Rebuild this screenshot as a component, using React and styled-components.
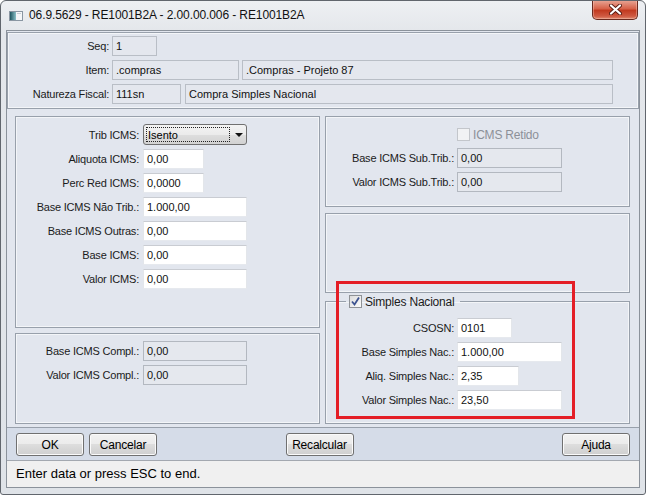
import React from "react";
import styled, { createGlobalStyle } from "styled-components";

const COLORS = {
  frame: "#e6e9ed",
  client: "#e2e6ee",
  panelLine: "#98a0ab",
  bar: "#d5dce8",
  status: "#f0f0f0",
  text: "#1b1b1b",
  disabledText: "#8c9098",
  red: "#e41e26",
};

const GlobalStyle = createGlobalStyle`
  html, body {
    margin: 0;
    padding: 0;
    background: #ffffff;
  }
  body {
    font-family: "Liberation Sans", Arial, sans-serif;
    font-size: 11px;
    color: ${COLORS.text};
  }
`;

const AppIcon = () => (
  <svg width="14" height="10" viewBox="0 0 14 10">
    <defs>
      <linearGradient id="appicon" x1="0" x2="1" y1="0" y2="0">
        <stop offset="0" stopColor="#1f5660" />
        <stop offset="1" stopColor="#8ac0c8" />
      </linearGradient>
    </defs>
    <rect x="0.5" y="0.5" width="13" height="9" fill="#f4f6f8" stroke="#8a96a2" />
    <rect x="1" y="1" width="6" height="8" fill="url(#appicon)" />
    <rect x="8" y="2" width="4" height="1" fill="#c6ced6" />
  </svg>
);

const CloseGlyph = () => (
  <svg width="13" height="11" viewBox="0 0 13 11">
    <path d="M2 1.5 L11 9.5 M11 1.5 L2 9.5" stroke="#5a1d14" strokeWidth="4" strokeLinecap="round" />
    <path d="M2 1.5 L11 9.5 M11 1.5 L2 9.5" stroke="#ffffff" strokeWidth="2.2" strokeLinecap="round" />
  </svg>
);

const CheckMark = () => (
  <svg width="11" height="11" viewBox="0 0 11 11">
    <path d="M2 5.5 L4.5 8.5 L9 1.5" fill="none" stroke="#3d5390" strokeWidth="1.8" />
  </svg>
);

const Checkbox = ({ checked, disabled }) => (
  <Box $disabled={disabled}>{checked && <CheckMark />}</Box>
);

const App = () => {
  return (
    <>
      <GlobalStyle />
      <Window>
        <TitleBar>
          <AppIcon />
          <Title>06.9.5629 - RE1001B2A - 2.00.00.006 - RE1001B2A</Title>
          <CloseButton>
            <CloseGlyph />
          </CloseButton>
        </TitleBar>
        <Client>
          <MainArea>
            <TopPanel>
              <FormGrid $labelW={100} $gap={3} $pt={3} $pb={4}>
                <Label>Seq:</Label>
                <Field $w={45} $readonly>1</Field>
                <Label>Item:</Label>
                <FieldPair $gap={3}>
                  <Field $w={127} $readonly>.compras</Field>
                  <Field $w={371} $readonly>.Compras - Projeto 87</Field>
                </FieldPair>
                <Label>Natureza Fiscal:</Label>
                <FieldPair $gap={4}>
                  <Field $w={69} $readonly>111sn</Field>
                  <Field $w={428} $readonly>Compra Simples Nacional</Field>
                </FieldPair>
              </FormGrid>
            </TopPanel>

            <Columns>
              <Column>
                <Panel $h={212}>
                  <FormGrid $labelW={122} $gap={4} $pt={7}>
                    <Label>Trib ICMS:</Label>
                    <Select>
                      <SelectText>Isento</SelectText>
                      <Arrow />
                    </Select>
                    <Label>Aliquota ICMS:</Label>
                    <Field $w={61}>0,00</Field>
                    <Label>Perc Red ICMS:</Label>
                    <Field $w={61}>0,0000</Field>
                    <Label>Base ICMS Não Trib.:</Label>
                    <Field $w={104}>1.000,00</Field>
                    <Label>Base ICMS Outras:</Label>
                    <Field $w={104}>0,00</Field>
                    <Label>Base ICMS:</Label>
                    <Field $w={104}>0,00</Field>
                    <Label>Valor ICMS:</Label>
                    <Field $w={104}>0,00</Field>
                  </FormGrid>
                </Panel>
                <Panel $grow $mt={5}>
                  <FormGrid $labelW={122} $gap={4} $pt={7}>
                    <Label>Base ICMS Compl.:</Label>
                    <Field $w={104} $disabled>0,00</Field>
                    <Label>Valor ICMS Compl.:</Label>
                    <Field $w={104} $disabled>0,00</Field>
                  </FormGrid>
                </Panel>
              </Column>

              <Column>
                <Panel $h={91}>
                  <FormGrid $labelW={127} $gap={3} $pt={8}>
                    <span />
                    <CheckRow $h={19}>
                      <Checkbox disabled />
                      <CheckLabel $disabled>ICMS Retido</CheckLabel>
                    </CheckRow>
                    <Label>Base ICMS Sub.Trib.:</Label>
                    <Field $w={105} $disabled>0,00</Field>
                    <Label>Valor ICMS Sub.Trib.:</Label>
                    <Field $w={105} $disabled>0,00</Field>
                  </FormGrid>
                </Panel>
                <Panel $h={80} $mt={6} />
                <GroupBox>
                  <Legend>
                    <Checkbox checked />
                    <CheckLabel>Simples Nacional</CheckLabel>
                  </Legend>
                  <FormGrid $labelW={127} $gap={3} $pt={9}>
                    <Label>CSOSN:</Label>
                    <Field $w={55}>0101</Field>
                    <Label>Base Simples Nac.:</Label>
                    <Field $w={105}>1.000,00</Field>
                    <Label>Aliq. Simples Nac.:</Label>
                    <Field $w={62}>2,35</Field>
                    <Label>Valor Simples Nac.:</Label>
                    <Field $w={105}>23,50</Field>
                  </FormGrid>
                </GroupBox>
              </Column>

              <Highlight />
            </Columns>
          </MainArea>

          <ButtonBar>
            <ButtonGroup>
              <Button>OK</Button>
              <Button>Cancelar</Button>
            </ButtonGroup>
            <Button $center>Recalcular</Button>
            <ButtonGroup $end>
              <Button>Ajuda</Button>
            </ButtonGroup>
          </ButtonBar>

          <StatusBar>Enter data or press ESC to end.</StatusBar>
        </Client>
      </Window>
    </>
  );
};

const Window = styled.div`
  box-sizing: border-box;
  width: 646px;
  height: 495px;
  display: flex;
  flex-direction: column;
  border: 1px solid #61666d;
  border-radius: 6px 6px 3px 3px;
  background: linear-gradient(to bottom, #eef0f3 0px, #e4e7eb 30px, #dfe3e8 100%);
  overflow: hidden;
`;

const TitleBar = styled.div`
  height: 29px;
  flex-shrink: 0;
  display: flex;
  align-items: center;
  padding-left: 8px;
  gap: 6px;
`;

const Title = styled.div`
  font-family: "Liberation Sans", Arial, sans-serif;
  font-size: 12px;
  letter-spacing: -0.1px;
  color: #111;
  flex: 1;
  padding-bottom: 1px;
`;

const CloseButton = styled.div`
  align-self: flex-start;
  margin-top: -1px;
  margin-right: 7px;
  width: 46px;
  height: 20px;
  box-sizing: border-box;
  display: flex;
  align-items: center;
  justify-content: center;
  border: 1px solid #6a2a1f;
  border-top: none;
  border-radius: 0 0 5px 5px;
  background: linear-gradient(to bottom, #e9a999 0%, #d7634a 45%, #c23a20 55%, #cf5a42 85%, #e28a70 100%);
  box-shadow: inset 0 0 0 1px rgba(255, 220, 210, 0.35);
`;

const Client = styled.div`
  flex: 1;
  display: flex;
  flex-direction: column;
  margin: 0 5px 6px 5px;
  border: 1px solid #8b929b;
  min-height: 0;
`;

const MainArea = styled.div`
  flex: 1;
  display: flex;
  flex-direction: column;
  background: ${COLORS.client};
  padding: 1px 0 3px 0;
  min-height: 0;
`;

const TopPanel = styled.div`
  border: 1px solid ${COLORS.panelLine};
  box-shadow: inset 0 0 0 1px #f3f5f8;
`;

const Columns = styled.div`
  position: relative;
  flex: 1;
  display: grid;
  grid-template-columns: 305px 305px;
  column-gap: 5px;
  padding: 0 9px 0 8px;
  margin-top: 7px;
  min-height: 0;
`;

const Column = styled.div`
  display: flex;
  flex-direction: column;
  min-height: 0;
`;

const Panel = styled.div`
  box-sizing: border-box;
  ${({ $h }) => ($h ? `height: ${$h}px;` : "")}
  ${({ $grow }) => ($grow ? "flex: 1;" : "flex-shrink: 0;")}
  margin-top: ${({ $mt }) => $mt || 0}px;
  border: 1px solid ${COLORS.panelLine};
  box-shadow: inset 0 0 0 1px #f3f5f8;
`;

const GroupBox = styled.fieldset`
  flex: 1;
  margin: 1px 0 0 0;
  padding: 0;
  min-width: 0;
  border: 1px solid ${COLORS.panelLine};
  box-shadow: inset 0 0 0 1px #f3f5f8;
`;

const Legend = styled.legend`
  margin-left: 20px;
  padding: 0 5px 0 3px;
  display: flex;
  align-items: center;
  gap: 3px;
  height: 15px;
`;

const FormGrid = styled.div`
  display: grid;
  grid-template-columns: ${({ $labelW }) => $labelW}px auto;
  column-gap: ${({ $gap }) => $gap}px;
  row-gap: 4px;
  align-items: center;
  justify-items: start;
  padding: ${({ $pt }) => $pt}px 0 ${({ $pb }) => $pb || 0}px 1px;
`;

const Label = styled.div`
  justify-self: end;
  white-space: nowrap;
  font-size: 11px;
  letter-spacing: -0.2px;
  color: ${COLORS.text};
`;

const FieldPair = styled.div`
  display: flex;
  gap: ${({ $gap }) => $gap}px;
`;

const Field = styled.div`
  box-sizing: border-box;
  width: ${({ $w }) => $w}px;
  height: 20px;
  display: flex;
  align-items: center;
  padding: 0 3px;
  font-size: 11px;
  white-space: nowrap;
  overflow: hidden;
  color: #111;
  border: 1px solid;
  ${({ $readonly, $disabled }) =>
    $readonly
      ? `background: #e4e7ee; border-color: #b9bec6;`
      : $disabled
      ? `background: #e5e8ee; border-color: #b3b8c0;`
      : `background: #ffffff; border-color: #c9ccd2 #e3e6ea #e6e9ee #e3e6ea;`}
`;

const Select = styled.div`
  box-sizing: border-box;
  width: 104px;
  height: 21px;
  display: flex;
  align-items: center;
  padding: 2px;
  border: 1px solid #707070;
  border-radius: 3px;
  background: linear-gradient(to bottom, #f3f3f3 0%, #ebebeb 50%, #dedede 50%, #d2d2d2 100%);
`;

const SelectText = styled.div`
  box-sizing: border-box;
  width: 84px;
  height: 15px;
  display: flex;
  align-items: center;
  padding-left: 1px;
  border: 1px dotted #222;
  font-size: 11px;
  color: #000;
`;

const Arrow = styled.div`
  margin-left: 5px;
  width: 0;
  height: 0;
  border-left: 4px solid transparent;
  border-right: 4px solid transparent;
  border-top: 4px solid #111;
`;

const CheckRow = styled.div`
  height: ${({ $h }) => $h}px;
  display: flex;
  align-items: center;
  gap: 3px;
`;

const Box = styled.div`
  box-sizing: border-box;
  width: 13px;
  height: 13px;
  display: flex;
  align-items: center;
  justify-content: center;
  border: 1px solid ${({ $disabled }) => ($disabled ? "#c3c6cb" : "#8f9296")};
  background: ${({ $disabled }) =>
    $disabled ? "#f1f2f4" : "linear-gradient(135deg, #dcdcdc, #fbfbfb)"};
`;

const CheckLabel = styled.span`
  font-size: 12px;
  letter-spacing: -0.2px;
  color: ${({ $disabled }) => ($disabled ? COLORS.disabledText : COLORS.text)};
`;

const Highlight = styled.div`
  position: absolute;
  left: 329px;
  top: 165px;
  width: 239px;
  height: 138px;
  box-sizing: border-box;
  border: 3px solid ${COLORS.red};
  pointer-events: none;
`;

const ButtonBar = styled.div`
  flex-shrink: 0;
  height: 33px;
  box-sizing: border-box;
  display: grid;
  grid-template-columns: 1fr auto 1fr;
  align-items: start;
  padding: 5px 9px 0 9px;
  border-top: 1px solid ${COLORS.panelLine};
  background: ${COLORS.bar};
`;

const ButtonGroup = styled.div`
  display: flex;
  gap: 5px;
  justify-content: ${({ $end }) => ($end ? "flex-end" : "flex-start")};
`;

const Button = styled.div`
  box-sizing: border-box;
  width: 68px;
  height: 23px;
  display: flex;
  align-items: center;
  justify-content: center;
  margin-right: ${({ $center }) => ($center ? 7 : 0)}px;
  border: 1px solid #707070;
  border-radius: 3px;
  background: linear-gradient(to bottom, #f2f2f2 0%, #ebebeb 50%, #dddddd 50%, #cfcfcf 100%);
  box-shadow: inset 0 0 0 1px #fafafa;
  font-size: 12px;
  letter-spacing: -0.2px;
  color: #000;
`;

const StatusBar = styled.div`
  flex-shrink: 0;
  height: 27px;
  box-sizing: border-box;
  display: flex;
  align-items: center;
  padding: 0 9px 1px 9px;
  border-top: 1px solid #a3a8b0;
  background: ${COLORS.status};
  font-family: "Liberation Sans", Arial, sans-serif;
  font-size: 13px;
  color: #000;
`;

export default App;
